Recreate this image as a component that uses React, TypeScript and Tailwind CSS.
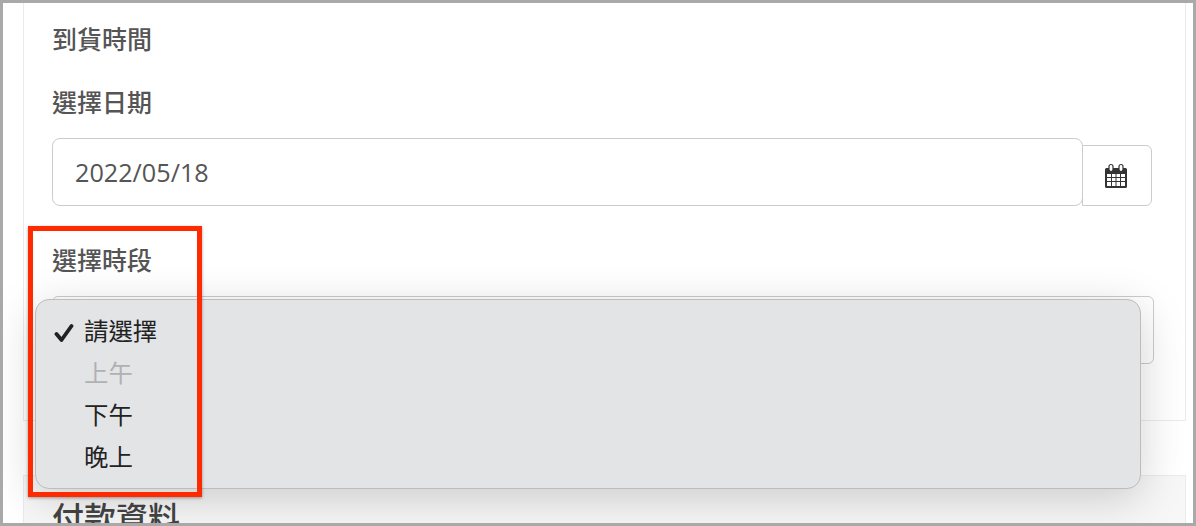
const options = [
  { label: "請選擇", checked: true },
  { label: "上午", disabled: true },
  { label: "下午" },
  { label: "晚上" },
]

function CalendarIcon() {
  return (
    <svg width="24" height="26" viewBox="0 0 24 26" fill="none">
      <path d="M2.5 5h19A1.5 1.5 0 0 1 23 6.5v17a1.5 1.5 0 0 1-1.5 1.5h-19A1.5 1.5 0 0 1 1 23.500v-17A1.5 1.500 0 0 1 2.500 5z" fill="#333" />
      <path d="M3 11h4v3H3zM8 11h3.500v3H8zM12.500 11H16v3h-3.500zM17 11h4v3h-4zM3 15h4v3H3zM8 15h3.500v3H8zM12.500 15H16v3h-3.500zM17 15h4v3h-4zM3 19h4v4H3zM8 19h3.500v4H8zM12.500 19H16v4h-3.500zM17 19h4v4h-4z" fill="#fff" />
      <rect x="5" y="1.500" width="4" height="7" rx="2" fill="#fff" stroke="#333" strokeWidth="1.200" />
      <rect x="15" y="1.500" width="4" height="7" rx="2" fill="#fff" stroke="#333" strokeWidth="1.200" />
    </svg>
  )
}

function CheckIcon() {
  return (
    <svg width="20" height="20" viewBox="0 0 20 20" fill="none">
      <path d="M2.500 11 L7.500 17 L17.500 3" stroke="#222" strokeWidth="3.800" strokeLinecap="round" strokeLinejoin="round" />
    </svg>
  )
}

export default function App() {
  return (
    <div
      className="relative h-[526px] w-[1196px] overflow-hidden border-[3px] border-[#a9a9a9] bg-white text-[#555]"
      style={{ fontFamily: '"Open Sans", "Noto Sans CJK TC", sans-serif' }}
    >
      <div className="ml-[20px] mr-[7px]">
        {/* 到貨時間 */}
        <div className="border-x border-b border-[#ebebeb] pb-[56px] pl-[28px] pr-[28px]">
          <h3 className="mt-0 pt-[18px] text-[25px] font-medium leading-[36px]">到貨時間</h3>
          <label className="mt-[27px] block text-[25px] font-medium leading-[36px]">選擇日期</label>
          <div className="mt-[18px] flex items-end">
            <div className="flex h-[68px] w-[1031px] items-center rounded-[8px] border border-[#ccc] bg-white pl-[22px] pt-[2px] text-[25.2px]">
              2022/05/18
            </div>
            <button className="-ml-px flex h-[61px] w-[70px] items-center justify-center rounded-r-[6px] border border-[#ccc] bg-white pr-[2px]">
              <CalendarIcon />
            </button>
          </div>
          <label className="mt-[36px] block text-[25px] font-medium leading-[36px]">選擇時段</label>
          <div className="mt-[18px] h-[68px] w-[1102px] rounded-[6px] border border-[#ccc] bg-white" />
        </div>

        {/* 付款資料 */}
        <div className="mt-[54px] h-[60px] border-x border-t border-[#ebebeb] bg-[#f7f7f7] pl-[28px] pt-[18px]">
          <h2 className="text-[32px] font-medium leading-[48px] text-[#444]">付款資料</h2>
        </div>
      </div>

      {/* native select menu */}
      <div className="absolute left-[32px] top-[296px] flex h-[190px] w-[1106px] flex-col rounded-[14px] border border-[#bdbdbd] bg-[#e3e4e6] pt-[10px] shadow-[0_10px_45px_rgba(0,0,0,0.18)]">
        {options.map((opt) => (
          <div
            key={opt.label}
            className={`relative h-[42px] pl-[48px] text-[24.4px] leading-[42px] ${opt.disabled ? "text-[#b0b1b3]" : "text-[#222]"}`}
          >
            {opt.checked && (
              <span className="absolute left-[18px] top-[13px]">
                <CheckIcon />
              </span>
            )}
            {opt.label}
          </div>
        ))}
      </div>

      {/* annotation */}
      <div className="absolute left-[25px] top-[223px] h-[271px] w-[174px] border-[5px] border-[#ff2a00] shadow-[0_1px_3px_rgba(0,0,0,0.35)]" />
    </div>
  )
}
